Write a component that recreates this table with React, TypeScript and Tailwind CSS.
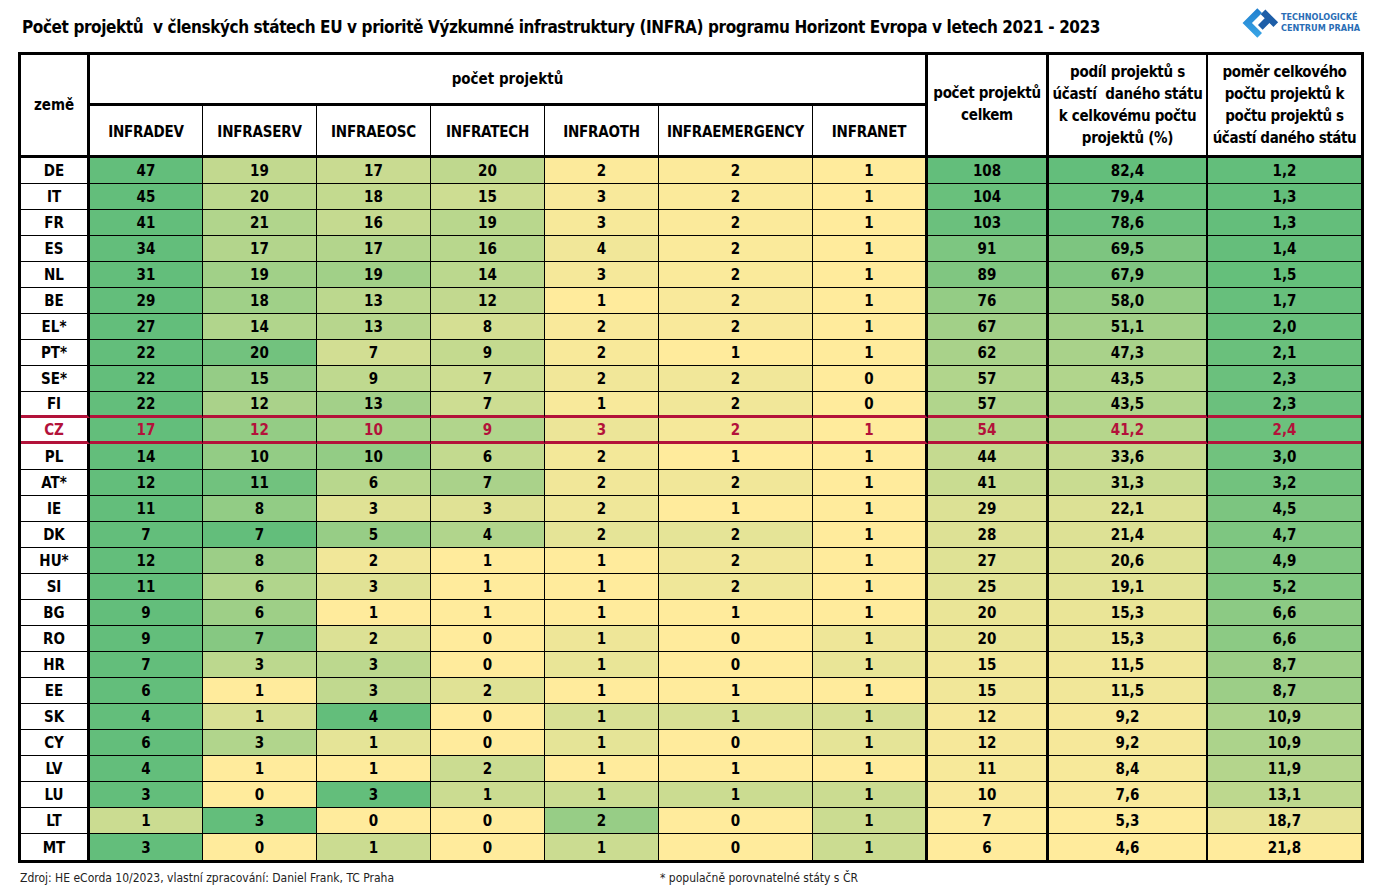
import React from 'react';

type Row = [string, number, number, number, number, number, number, number, number, string, string];

const rows: Row[] = [
  ['DE', 47, 19, 17, 20, 2, 2, 1, 108, '82,4', '1,2'],
  ['IT', 45, 20, 18, 15, 3, 2, 1, 104, '79,4', '1,3'],
  ['FR', 41, 21, 16, 19, 3, 2, 1, 103, '78,6', '1,3'],
  ['ES', 34, 17, 17, 16, 4, 2, 1, 91, '69,5', '1,4'],
  ['NL', 31, 19, 19, 14, 3, 2, 1, 89, '67,9', '1,5'],
  ['BE', 29, 18, 13, 12, 1, 2, 1, 76, '58,0', '1,7'],
  ['EL*', 27, 14, 13, 8, 2, 2, 1, 67, '51,1', '2,0'],
  ['PT*', 22, 20, 7, 9, 2, 1, 1, 62, '47,3', '2,1'],
  ['SE*', 22, 15, 9, 7, 2, 2, 0, 57, '43,5', '2,3'],
  ['FI', 22, 12, 13, 7, 1, 2, 0, 57, '43,5', '2,3'],
  ['CZ', 17, 12, 10, 9, 3, 2, 1, 54, '41,2', '2,4'],
  ['PL', 14, 10, 10, 6, 2, 1, 1, 44, '33,6', '3,0'],
  ['AT*', 12, 11, 6, 7, 2, 2, 1, 41, '31,3', '3,2'],
  ['IE', 11, 8, 3, 3, 2, 1, 1, 29, '22,1', '4,5'],
  ['DK', 7, 7, 5, 4, 2, 2, 1, 28, '21,4', '4,7'],
  ['HU*', 12, 8, 2, 1, 1, 2, 1, 27, '20,6', '4,9'],
  ['SI', 11, 6, 3, 1, 1, 2, 1, 25, '19,1', '5,2'],
  ['BG', 9, 6, 1, 1, 1, 1, 1, 20, '15,3', '6,6'],
  ['RO', 9, 7, 2, 0, 1, 0, 1, 20, '15,3', '6,6'],
  ['HR', 7, 3, 3, 0, 1, 0, 1, 15, '11,5', '8,7'],
  ['EE', 6, 1, 3, 2, 1, 1, 1, 15, '11,5', '8,7'],
  ['SK', 4, 1, 4, 0, 1, 1, 1, 12, '9,2', '10,9'],
  ['CY', 6, 3, 1, 0, 1, 0, 1, 12, '9,2', '10,9'],
  ['LV', 4, 1, 1, 2, 1, 1, 1, 11, '8,4', '11,9'],
  ['LU', 3, 0, 3, 1, 1, 1, 1, 10, '7,6', '13,1'],
  ['LT', 1, 3, 0, 0, 2, 0, 1, 7, '5,3', '18,7'],
  ['MT', 3, 0, 1, 0, 1, 0, 1, 6, '4,6', '21,8'],
];

const infraCols = ['INFRADEV', 'INFRASERV', 'INFRAEOSC', 'INFRATECH', 'INFRAOTH', 'INFRAEMERGENCY', 'INFRANET'];

// excel-like 2 colour scale, t = 0 -> yellow, t = 1 -> green
const YELLOW = [255, 235, 156];
const GREEN = [99, 190, 123];
function scale(t: number) {
  const c = YELLOW.map((y, i) => Math.round(y + (GREEN[i] - y) * t));
  return `rgb(${c[0]}, ${c[1]}, ${c[2]})`;
}

const num = (s: string) => parseFloat(s.replace(',', '.'));
const totals = rows.map((r) => r[8]);
const shares = rows.map((r) => num(r[9]));
const ratios = rows.map((r) => num(r[10]));
const range = (a: number[]) => [Math.min(...a), Math.max(...a)];
const [tMin, tMax] = range(totals);
const [sMin, sMax] = range(shares);
const [rMin, rMax] = range(ratios);

const rightBorder = [
  'border-r-[3px]',
  'border-r',
  'border-r',
  'border-r',
  'border-r',
  'border-r',
  'border-r',
  'border-r-[3px]',
  'border-r-[3px]',
  'border-r-2',
  '',
];

function Logo() {
  return (
    <div className="flex items-center gap-[2px] mr-[21px] mt-[4px]">
      <svg width="38" height="38" viewBox="0 0 40 40">
        <defs>
          <linearGradient id="cgrad" x1="0" y1="0" x2="1" y2="1">
            <stop offset="0" stopColor="#1f7fcf" />
            <stop offset="1" stopColor="#3aa6e6" />
          </linearGradient>
        </defs>
        <g transform="translate(20 20) rotate(45)">
          {/* C */}
          <path d="M-13 -9 L-6 -9 L-6 6 L9 6 L9 13 L-13 13 Z" fill="url(#cgrad)" />
          {/* T */}
          <path d="M-6 -14 L13 -14 L13 -7 L7 -7 L7 3 L0 3 L0 -7 L-6 -7 Z" fill="#1d5ea8" />
        </g>
      </svg>
      <div className="text-[9px] leading-[11px] font-bold text-[#2a6db5]">
        <div>TECHNOLOGICKÉ</div>
        <div>CENTRUM PRAHA</div>
      </div>
    </div>
  );
}

export default function App() {
  return (
    <div className="w-[1381px] h-[894px] bg-white text-black font-[family-name:'DejaVu_Sans_Condensed','Liberation_Sans',sans-serif]">
      <div className="flex justify-between items-start h-[52px]">
        <h1 className="ml-[22px] mt-[16px] text-[17px] leading-[22px] font-bold tracking-[-0.4px] whitespace-pre">
          Počet projektů  v členských státech EU v prioritě Výzkumné infrastruktury (INFRA) programu Horizont Evropa v letech 2021 - 2023
        </h1>
        <Logo />
      </div>

      <div className="ml-[18px] w-[1346px] border-[3px] border-black grid grid-cols-[69px_113px_114px_114px_114px_114px_154px_115px_121px_159px_153px] grid-rows-[51px_52px] text-[15px] font-bold">
        <div className="row-span-2 border-r-[3px] border-b-[3px] border-black flex items-center justify-center">země</div>
        <div className="col-span-7 border-r-[3px] border-b-[3px] border-black flex items-center justify-center">počet projektů</div>
        <div className="row-span-2 border-r-[3px] border-b-[3px] border-black flex items-center justify-center text-center leading-[22px] tracking-[-0.3px] pb-[2px]">
          počet projektů<br />celkem
        </div>
        <div className="row-span-2 border-r-2 border-b-[3px] border-black flex items-center justify-center text-center leading-[22px] tracking-[-0.3px] whitespace-pre">
          {'podíl projektů s\núčastí  daného státu\nk celkovému počtu\nprojektů (%)'}
        </div>
        <div className="row-span-2 border-b-[3px] border-black flex items-center justify-center text-center leading-[22px] tracking-[-0.4px] whitespace-pre">
          {'poměr celkového\npočtu projektů k\npočtu projektů s\núčastí daného státu'}
        </div>
        {infraCols.map((c, i) => (
          <div
            key={c}
            className={`border-b-[3px] border-black flex items-center justify-center tracking-[-0.2px] pt-[4px] ${i === 6 ? 'border-r-[3px]' : 'border-r'}`}
          >
            {c}
          </div>
        ))}

        {rows.map((r, ri) => {
          const infra = r.slice(1, 8) as number[];
          const lo = Math.min(...infra);
          const hi = Math.max(...infra);
          const isCz = r[0] === 'CZ';
          const redBottom = ri === 9 || ri === 10;
          const last = ri === rows.length - 1;
          const bottom = redBottom
            ? 'border-b-[3px] border-b-[#b3123a]'
            : last
              ? 'border-b-0'
              : 'border-b';
          const text = isCz ? 'text-[#b3123a]' : 'text-black';
          const cells: { v: string; bg?: string }[] = [
            { v: r[0] },
            ...infra.map((v) => ({ v: String(v), bg: scale(hi === lo ? 0 : (v - lo) / (hi - lo)) })),
            { v: String(r[8]), bg: scale((r[8] - tMin) / (tMax - tMin)) },
            { v: r[9], bg: scale((num(r[9]) - sMin) / (sMax - sMin)) },
            { v: r[10], bg: scale((rMax - num(r[10])) / (rMax - rMin)) },
          ];
          return cells.map((c, ci) => (
            <div
              key={`${ri}-${ci}`}
              className={`h-[26px] pt-[2px] flex items-center justify-center border-black ${rightBorder[ci]} ${bottom} ${text}`}
              style={c.bg ? { backgroundColor: c.bg } : undefined}
            >
              {c.v}
            </div>
          ));
        })}
      </div>

      <div className="flex mt-[6px] text-[12px] text-[#222] font-normal">
        <div className="ml-[20px] w-[640px]">Zdroj: HE eCorda 10/2023, vlastní zpracování: Daniel Frank, TC Praha</div>
        <div>* populačně porovnatelné státy s ČR</div>
      </div>
    </div>
  );
}
